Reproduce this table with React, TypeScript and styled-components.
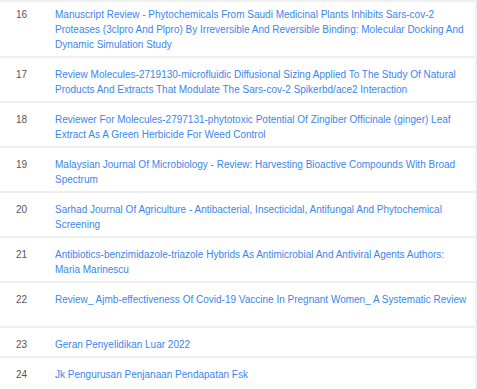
import React from "react";
import styled, { createGlobalStyle } from "styled-components";

const items = [
  {
    no: 16,
    title:
      "Manuscript Review - Phytochemicals From Saudi Medicinal Plants Inhibits Sars-cov-2 Proteases (3clpro And Plpro) By Irreversible And Reversible Binding: Molecular Docking And Dynamic Simulation Study",
  },
  {
    no: 17,
    title:
      "Review Molecules-2719130-microfluidic Diffusional Sizing Applied To The Study Of Natural Products And Extracts That Modulate The Sars-cov-2 Spikerbd/ace2 Interaction",
  },
  {
    no: 18,
    title:
      "Reviewer For Molecules-2797131-phytotoxic Potential Of Zingiber Officinale (ginger) Leaf Extract As A Green Herbicide For Weed Control",
  },
  {
    no: 19,
    title:
      "Malaysian Journal Of Microbiology - Review: Harvesting Bioactive Compounds With Broad Spectrum",
  },
  {
    no: 20,
    title:
      "Sarhad Journal Of Agriculture - Antibacterial, Insecticidal, Antifungal And Phytochemical Screening",
  },
  {
    no: 21,
    title:
      "Antibiotics-benzimidazole-triazole Hybrids As Antimicrobial And Antiviral Agents Authors: Maria Marinescu",
  },
  {
    no: 22,
    title:
      "Review_ Ajmb-effectiveness Of Covid-19 Vaccine In Pregnant Women_ A Systematic Review",
    tall: true,
  },
  { no: 23, title: "Geran Penyelidikan Luar 2022" },
  { no: 24, title: "Jk Pengurusan Penjanaan Pendapatan Fsk" },
];

const App = () => {
  return (
    <>
      <GlobalStyle />
      <S.Frame>
        <S.Table>
          {items.map((item) => (
            <S.Row key={item.no}>
              <S.No>{item.no}</S.No>
              <S.Title $tall={item.tall}>
                <S.Link href="#">{item.title}</S.Link>
              </S.Title>
            </S.Row>
          ))}
        </S.Table>
      </S.Frame>
    </>
  );
};

export default App;

const GlobalStyle = createGlobalStyle`
  html, body {
    margin: 0;
    padding: 0;
    background: #fff;
  }
  body {
    font-family: "Liberation Sans", Arial, sans-serif;
    font-size: 10px;
  }
`;

const S = {
  Frame: styled.div`
    width: 477px;
    height: 389px;
    overflow: hidden;
    border-top: 2px solid #efefef;
    border-right: 2px solid #efefef;
    box-sizing: border-box;
  `,
  Table: styled.div`
    margin-top: -6px;
  `,
  Row: styled.div`
    display: flex;
    border-top: 2px solid #efefef;
  `,
  No: styled.div`
    width: 55px;
    flex-shrink: 0;
    padding: 9px 0 4px 16px;
    box-sizing: border-box;
    color: #555;
    line-height: 15px;
  `,
  Title: styled.div<{ $tall?: boolean }>`
    flex: 1;
    padding: 9px 6px 4px 0;
    line-height: 15px;
    min-height: ${(p) => (p.$tall ? "30px" : "0")};
  `,
  Link: styled.a`
    color: #3b86ec;
    text-decoration: none;
  `,
};
